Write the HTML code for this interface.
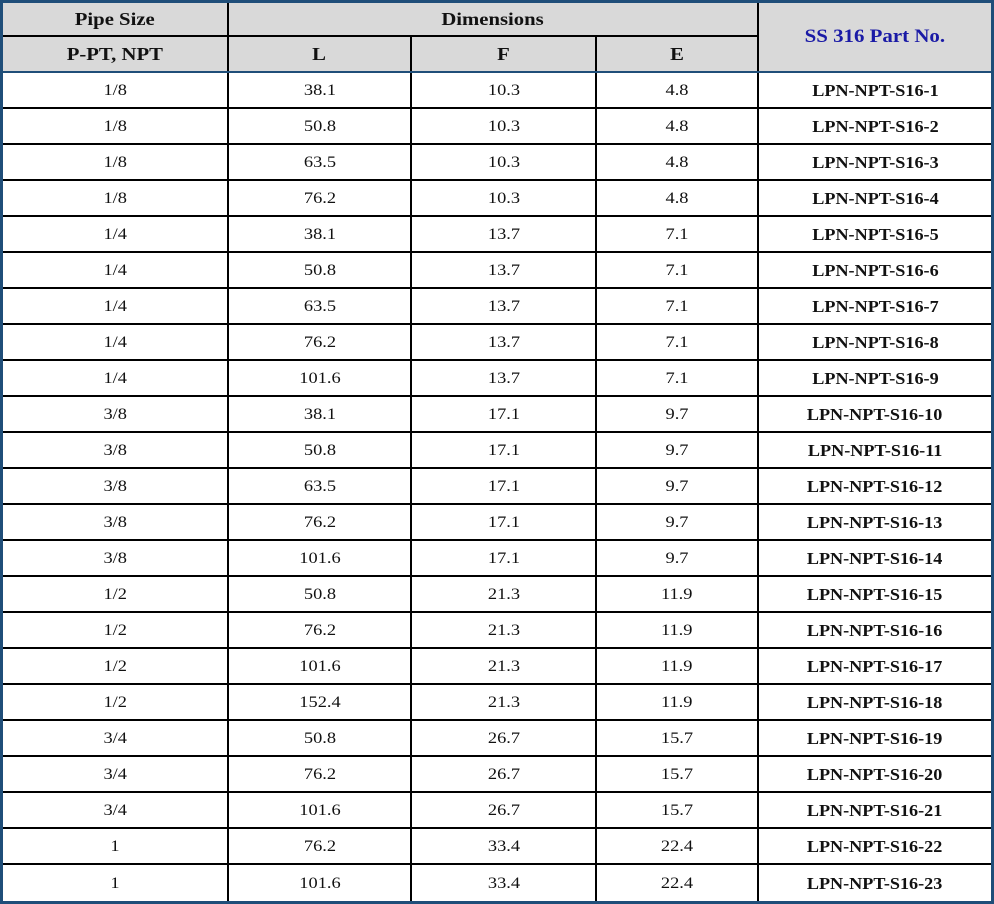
<!DOCTYPE html>
<html><head><meta charset="utf-8"><style>
*{margin:0;padding:0;box-sizing:border-box}
body{width:994px;height:904px;background:#1f4e79;position:relative;overflow:hidden;font-family:"Liberation Serif",serif;color:#111}
.t{position:absolute;left:3px;top:3px;width:988px;height:898px;background:#fff}
.row{display:flex;height:36px;border-bottom:2px solid #000}
.row:last-child{border-bottom:none}
.c{display:flex;align-items:center;justify-content:center;border-right:2px solid #000;font-size:16px;height:100%;padding-top:2px}
.c,.hd div{transform-origin:center}
.c1{width:226px}.c2{width:183px}.c3{width:185px}.c4{width:162px}.c5{width:232px;border-right:none;font-weight:bold;font-size:16.5px}
.s{display:inline-block;transform:scaleX(1.15);white-space:nowrap}
.c5 .s{transform:scaleX(1.1)}
.hd{position:relative;height:70px;background:#d9d9d9;border-bottom:2px solid #1f4e79;font-weight:bold;font-size:18px}
.hd div{position:absolute;display:flex;align-items:center;justify-content:center}
</style></head><body><div class="t">
<div class="hd">
<div style="left:0;top:0;width:224px;height:33px;"><span class="s">Pipe Size</span></div>
<div style="left:224px;top:0;width:2px;height:68px;background:#000"></div>
<div style="left:0;top:32px;width:754px;height:2px;background:#000"></div>
<div style="left:226px;top:0;width:528px;height:33px;"><span class="s">Dimensions</span></div>
<div style="left:754px;top:0;width:2px;height:68px;background:#000"></div>
<div style="left:0;top:34px;width:224px;height:34px;"><span class="s">P-PT, NPT</span></div>
<div style="left:226px;top:34px;width:181px;height:34px;"><span class="s">L</span></div>
<div style="left:407px;top:34px;width:2px;height:34px;background:#000"></div>
<div style="left:409px;top:34px;width:183px;height:34px;"><span class="s">F</span></div>
<div style="left:592px;top:34px;width:2px;height:34px;background:#000"></div>
<div style="left:594px;top:34px;width:160px;height:34px;"><span class="s">E</span></div>
<div style="left:756px;top:0;width:232px;height:68px;color:#1a1aa6;font-size:19px"><span class="s" style="transform:scaleX(1.1)">SS 316 Part No.</span></div>
</div>
<div class="row"><div class="c c1"><span class="s">1/8</span></div><div class="c c2"><span class="s">38.1</span></div><div class="c c3"><span class="s">10.3</span></div><div class="c c4"><span class="s">4.8</span></div><div class="c c5"><span class="s">LPN-NPT-S16-1</span></div></div>
<div class="row"><div class="c c1"><span class="s">1/8</span></div><div class="c c2"><span class="s">50.8</span></div><div class="c c3"><span class="s">10.3</span></div><div class="c c4"><span class="s">4.8</span></div><div class="c c5"><span class="s">LPN-NPT-S16-2</span></div></div>
<div class="row"><div class="c c1"><span class="s">1/8</span></div><div class="c c2"><span class="s">63.5</span></div><div class="c c3"><span class="s">10.3</span></div><div class="c c4"><span class="s">4.8</span></div><div class="c c5"><span class="s">LPN-NPT-S16-3</span></div></div>
<div class="row"><div class="c c1"><span class="s">1/8</span></div><div class="c c2"><span class="s">76.2</span></div><div class="c c3"><span class="s">10.3</span></div><div class="c c4"><span class="s">4.8</span></div><div class="c c5"><span class="s">LPN-NPT-S16-4</span></div></div>
<div class="row"><div class="c c1"><span class="s">1/4</span></div><div class="c c2"><span class="s">38.1</span></div><div class="c c3"><span class="s">13.7</span></div><div class="c c4"><span class="s">7.1</span></div><div class="c c5"><span class="s">LPN-NPT-S16-5</span></div></div>
<div class="row"><div class="c c1"><span class="s">1/4</span></div><div class="c c2"><span class="s">50.8</span></div><div class="c c3"><span class="s">13.7</span></div><div class="c c4"><span class="s">7.1</span></div><div class="c c5"><span class="s">LPN-NPT-S16-6</span></div></div>
<div class="row"><div class="c c1"><span class="s">1/4</span></div><div class="c c2"><span class="s">63.5</span></div><div class="c c3"><span class="s">13.7</span></div><div class="c c4"><span class="s">7.1</span></div><div class="c c5"><span class="s">LPN-NPT-S16-7</span></div></div>
<div class="row"><div class="c c1"><span class="s">1/4</span></div><div class="c c2"><span class="s">76.2</span></div><div class="c c3"><span class="s">13.7</span></div><div class="c c4"><span class="s">7.1</span></div><div class="c c5"><span class="s">LPN-NPT-S16-8</span></div></div>
<div class="row"><div class="c c1"><span class="s">1/4</span></div><div class="c c2"><span class="s">101.6</span></div><div class="c c3"><span class="s">13.7</span></div><div class="c c4"><span class="s">7.1</span></div><div class="c c5"><span class="s">LPN-NPT-S16-9</span></div></div>
<div class="row"><div class="c c1"><span class="s">3/8</span></div><div class="c c2"><span class="s">38.1</span></div><div class="c c3"><span class="s">17.1</span></div><div class="c c4"><span class="s">9.7</span></div><div class="c c5"><span class="s">LPN-NPT-S16-10</span></div></div>
<div class="row"><div class="c c1"><span class="s">3/8</span></div><div class="c c2"><span class="s">50.8</span></div><div class="c c3"><span class="s">17.1</span></div><div class="c c4"><span class="s">9.7</span></div><div class="c c5"><span class="s">LPN-NPT-S16-11</span></div></div>
<div class="row"><div class="c c1"><span class="s">3/8</span></div><div class="c c2"><span class="s">63.5</span></div><div class="c c3"><span class="s">17.1</span></div><div class="c c4"><span class="s">9.7</span></div><div class="c c5"><span class="s">LPN-NPT-S16-12</span></div></div>
<div class="row"><div class="c c1"><span class="s">3/8</span></div><div class="c c2"><span class="s">76.2</span></div><div class="c c3"><span class="s">17.1</span></div><div class="c c4"><span class="s">9.7</span></div><div class="c c5"><span class="s">LPN-NPT-S16-13</span></div></div>
<div class="row"><div class="c c1"><span class="s">3/8</span></div><div class="c c2"><span class="s">101.6</span></div><div class="c c3"><span class="s">17.1</span></div><div class="c c4"><span class="s">9.7</span></div><div class="c c5"><span class="s">LPN-NPT-S16-14</span></div></div>
<div class="row"><div class="c c1"><span class="s">1/2</span></div><div class="c c2"><span class="s">50.8</span></div><div class="c c3"><span class="s">21.3</span></div><div class="c c4"><span class="s">11.9</span></div><div class="c c5"><span class="s">LPN-NPT-S16-15</span></div></div>
<div class="row"><div class="c c1"><span class="s">1/2</span></div><div class="c c2"><span class="s">76.2</span></div><div class="c c3"><span class="s">21.3</span></div><div class="c c4"><span class="s">11.9</span></div><div class="c c5"><span class="s">LPN-NPT-S16-16</span></div></div>
<div class="row"><div class="c c1"><span class="s">1/2</span></div><div class="c c2"><span class="s">101.6</span></div><div class="c c3"><span class="s">21.3</span></div><div class="c c4"><span class="s">11.9</span></div><div class="c c5"><span class="s">LPN-NPT-S16-17</span></div></div>
<div class="row"><div class="c c1"><span class="s">1/2</span></div><div class="c c2"><span class="s">152.4</span></div><div class="c c3"><span class="s">21.3</span></div><div class="c c4"><span class="s">11.9</span></div><div class="c c5"><span class="s">LPN-NPT-S16-18</span></div></div>
<div class="row"><div class="c c1"><span class="s">3/4</span></div><div class="c c2"><span class="s">50.8</span></div><div class="c c3"><span class="s">26.7</span></div><div class="c c4"><span class="s">15.7</span></div><div class="c c5"><span class="s">LPN-NPT-S16-19</span></div></div>
<div class="row"><div class="c c1"><span class="s">3/4</span></div><div class="c c2"><span class="s">76.2</span></div><div class="c c3"><span class="s">26.7</span></div><div class="c c4"><span class="s">15.7</span></div><div class="c c5"><span class="s">LPN-NPT-S16-20</span></div></div>
<div class="row"><div class="c c1"><span class="s">3/4</span></div><div class="c c2"><span class="s">101.6</span></div><div class="c c3"><span class="s">26.7</span></div><div class="c c4"><span class="s">15.7</span></div><div class="c c5"><span class="s">LPN-NPT-S16-21</span></div></div>
<div class="row"><div class="c c1"><span class="s">1</span></div><div class="c c2"><span class="s">76.2</span></div><div class="c c3"><span class="s">33.4</span></div><div class="c c4"><span class="s">22.4</span></div><div class="c c5"><span class="s">LPN-NPT-S16-22</span></div></div>
<div class="row"><div class="c c1"><span class="s">1</span></div><div class="c c2"><span class="s">101.6</span></div><div class="c c3"><span class="s">33.4</span></div><div class="c c4"><span class="s">22.4</span></div><div class="c c5"><span class="s">LPN-NPT-S16-23</span></div></div>
</div></body></html>
